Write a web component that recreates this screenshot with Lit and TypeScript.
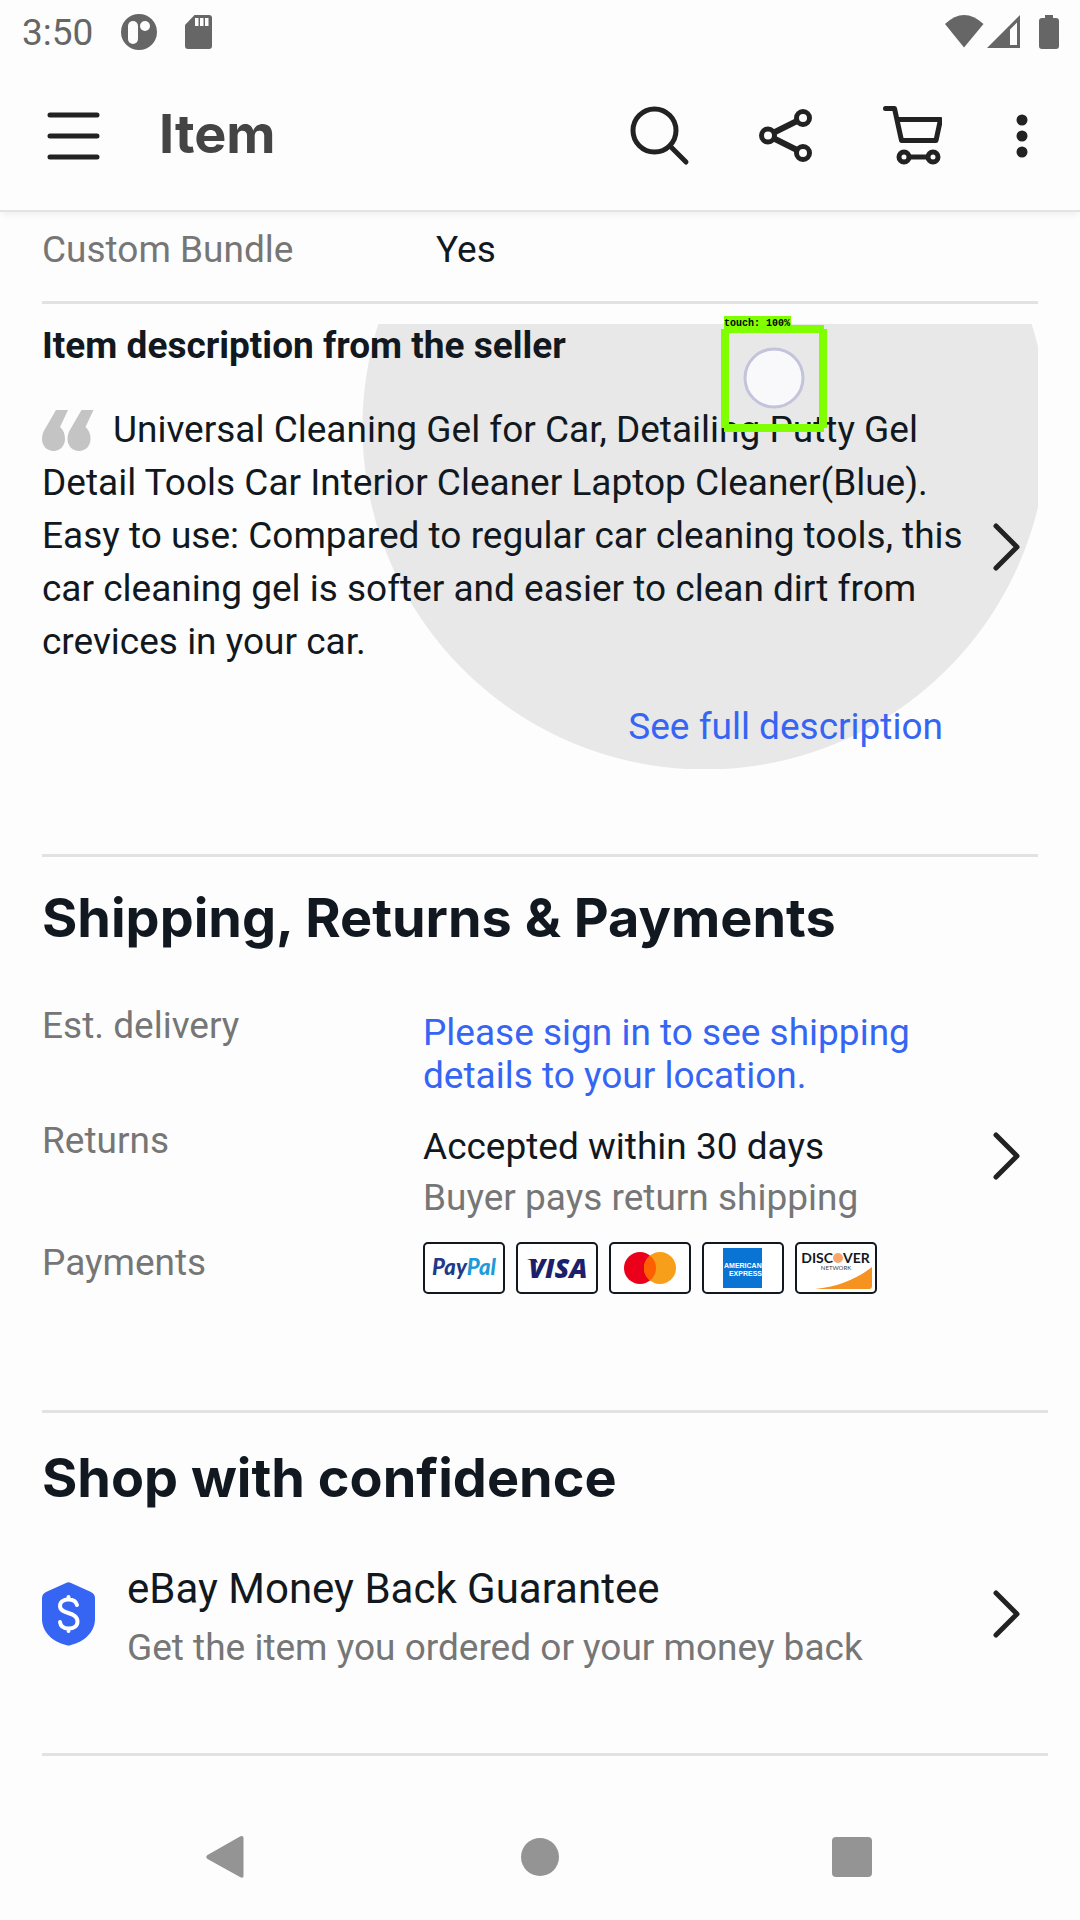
import { LitElement, html, css, svg } from "lit";
import { customElement } from "lit/decorators.js";

const chevron = html`<svg class="chevron" viewBox="0 0 28 48" width="28" height="48" aria-hidden="true">
  <path d="M4 3L25 24L4 45" fill="none" stroke="#222" stroke-width="5" stroke-linecap="round" stroke-linejoin="round" />
</svg>`;

const cards = [
  {
    name: "PayPal",
    art: svg`<text class="paypal" x="41" y="33" text-anchor="middle"><tspan fill="#1f3a87">Pay</tspan><tspan fill="#1e9bd9">Pal</tspan></text>`,
  },
  {
    name: "Visa",
    art: svg`<path d="M11 17h9l2 4z" fill="#1c1f6b" /><text class="visa" x="42" y="36" text-anchor="middle">VISA</text>`,
  },
  {
    name: "Mastercard",
    art: svg`<circle cx="31" cy="26" r="16" fill="#eb001b" /><circle cx="51" cy="26" r="16" fill="#f79e1b" />
      <path d="M41 13.500a16 16 0 0 1 0 25a16 16 0 0 1 0-25z" fill="#ff5f00" />`,
  },
  {
    name: "American Express",
    art: svg`<rect x="21" y="6" width="39" height="40" fill="#0a74d4" />
      <text class="amex" x="22" y="26">AMERICAN</text><text class="amex" x="60" y="34" text-anchor="end">EXPRESS</text>`,
  },
  {
    name: "Discover",
    art: svg`<text class="discover" x="38" y="21" text-anchor="end">DISC</text><circle cx="43" cy="16" r="5" fill="#f9a66c" />
      <text class="discover" x="48" y="21">VER</text><text class="network" x="41" y="28" text-anchor="middle">NETWORK</text>
      <path d="M20 47C42 45 62 37 77 25V44a3 3 0 0 1-3 3z" fill="#f69220" />`,
  },
];

@customElement("app-root")
export class AppRoot extends LitElement {
  static styles = css`
    :host {
      display: block;
      font-family: Roboto, "Liberation Sans", sans-serif;
      font-size: 37px;
      line-height: 42px;
      color: #111820;
      background: #fdfdfd;
    }
    .screen { display: flex; flex-direction: column; min-height: 100vh; }
    svg { display: block; flex: none; }
    h1, h2, h3, p, dl, dd { margin: 0; }
    a { color: #3665f3; text-decoration: none; }
    button { display: flex; align-items: center; justify-content: center; padding: 0; border: 0; background: none; cursor: pointer; }

    .status { display: flex; align-items: center; justify-content: space-between; height: 63px; padding: 0 20px 0 22px; color: #666; }
    .status-group { display: flex; align-items: center; }
    .status-left { gap: 28px; }
    .time { padding-top: 3px; }

    .bar { display: flex; align-items: center; height: 145px; padding: 0 37px 2px 37px; border-bottom: 2px solid #e3e3e3; box-shadow: 0 5px 6px -2px rgba(0, 0, 0, 0.06); }
    .title { flex: 1; margin-left: 48px; padding-bottom: 4px; font: 700 54px/64px Inter, sans-serif; color: #444; }
    .menu { width: 74px; height: 96px; }
    .actions { display: flex; align-items: center; gap: 52px; }
    .action { width: 74px; height: 96px; }
    .more { width: 42px; }

    main { flex: 1; padding: 17px 42px 0; }
    .specific { display: grid; grid-template-columns: 394px 1fr; padding-bottom: 30px; border-bottom: 3px solid #e2e2e2; }
    .muted { color: #767676; }

    .description {
      position: relative;
      display: flex;
      align-items: center;
      margin: 20px 0 85px;
      padding-right: 18px;
      background: radial-gradient(circle at 663px 103px, #e8e8e8 342px, transparent 343px);
    }
    .description-body { flex: 1; padding: 1px 16px 21px 0; }
    .description-title { font-size: 37px; font-weight: 700; }
    .quote { margin-top: 36px; line-height: 53px; }
    .quote-mark { display: inline-block; margin-right: 19px; vertical-align: -9px; }
    .more-line { margin: 38px 33px 0 0; text-align: right; }

    .touch { position: absolute; left: 679px; top: -8px; }
    .touch-label { position: absolute; left: 3px; top: 0; width: 67px; padding-top: 3px; font: 700 10px/10px "Liberation Mono", monospace; color: #000; background: #80ff00; white-space: nowrap; }

    .section { margin-right: -10px; border-bottom: 3px solid #e2e2e2; }
    .shipping { padding: 29px 0 104px; }
    .divider { height: 3px; background: #e2e2e2; }
    .heading { font: 700 54px/64px Inter, sans-serif; margin-bottom: 55px; }
    .linked { display: flex; align-items: center; padding-right: 28px; }
    .rows { flex: 1; display: grid; gap: 23px; padding-bottom: 12px; }
    .row { display: grid; grid-template-columns: 381px 1fr; }
    .value { padding-top: 6px; }
    .value-link { display: block; max-width: 510px; line-height: 43px; }
    .note { margin-top: 9px; }
    .cards { display: flex; gap: 11px; }

    .paypal { font: italic 900 22px Lato, sans-serif; }
    .visa { font: italic 800 27px "Open Sans", sans-serif; fill: #1c1f6b; }
    .amex { font: 700 7px "Liberation Sans", sans-serif; fill: #fff; }
    .discover { font: 700 14px Lato, sans-serif; fill: #111820; }
    .network { font: 6px Lato, sans-serif; fill: #444; }

    .confidence { padding: 33px 0 84px; }
    .confidence .heading { margin-bottom: 48px; }
    .guarantee { flex: 1; margin-left: 32px; padding-top: 6px; }
    .guarantee-title { font-size: 42px; font-weight: 400; line-height: 50px; margin-bottom: 13px; }

    .nav { display: grid; grid-template-columns: 1fr 1fr 1fr; height: 126px; padding: 0 72px; }
  `;

  render() {
    return html`<div class="screen">
      <div class="status">
        <div class="status-group status-left">
          <span class="time">3:50</span>
          <svg width="36" height="36" viewBox="0 0 36 36" aria-hidden="true">
            <circle cx="18" cy="18" r="18" fill="#666" />
            <rect x="7" y="7" width="10" height="23" rx="5" fill="#fdfdfd" /><circle cx="24" cy="12" r="5" fill="#fdfdfd" />
          </svg>
          <svg width="27" height="34" viewBox="0 0 27 34" aria-hidden="true">
            <path d="M9.500 0H24a3 3 0 0 1 3 3V31a3 3 0 0 1-3 3H3a3 3 0 0 1-3-3V10z" fill="#666" />
            <path d="M10 3h3.500v8H10zM15 3h3.500v8H15zM20 3h3.500v8H20z" fill="#fdfdfd" />
          </svg>
        </div>
        <div class="status-group">
          <svg width="116" height="36" viewBox="0 0 116 36" aria-hidden="true">
            <g fill="#666">
              <path d="M1 10Q20-8 39.500 10L20 33.500z" />
              <path fill-rule="evenodd" d="M43 34L76 1V34zM66 15.500V31H73V8.500z" />
              <path d="M101 1h8v3h3a3 3 0 0 1 3 3V32a3 3 0 0 1-3 3H98a3 3 0 0 1-3-3V7a3 3 0 0 1 3-3h3z" />
            </g>
          </svg>
        </div>
      </div>

      <header class="bar">
        <button class="menu" aria-label="Menu">
          <svg width="54" height="48" viewBox="0 0 54 48"><path d="M3 3H50M3 24H50M3 45H50" stroke="#222" stroke-width="5" stroke-linecap="round" /></svg>
        </button>
        <h1 class="title">Item</h1>
        <div class="actions">
          <button class="action" aria-label="Search">
            <svg width="60" height="60" viewBox="0 0 60 60" fill="none" stroke="#222" stroke-width="5" stroke-linecap="round">
              <circle cx="24.500" cy="24.500" r="21.500" /><path d="M40 40L56 56" />
            </svg>
          </button>
          <button class="action" aria-label="Share">
            <svg width="60" height="60" viewBox="0 0 60 60" fill="none" stroke="#222" stroke-width="5">
              <circle cx="12" cy="29.500" r="6.500" /><circle cx="47" cy="12" r="6.500" /><circle cx="47" cy="47" r="6.500" />
              <path d="M18 26.500L41 15M18 32.500L41 44" stroke-width="6" />
            </svg>
          </button>
          <button class="action" aria-label="Cart">
            <svg width="60" height="60" viewBox="0 0 60 60" fill="none" stroke="#222" stroke-width="5" stroke-linecap="round" stroke-linejoin="round">
              <path d="M3.500 2.500H12.500L19.500 34.500H54L58.500 13.500H15" /><circle cx="22" cy="51" r="5" /><circle cx="51" cy="51" r="5" /><path d="M28 51H45" />
            </svg>
          </button>
          <button class="action more" aria-label="More options">
            <svg width="12" height="48" viewBox="0 0 12 48" fill="#222"><circle cx="6" cy="8" r="5.500" /><circle cx="6" cy="24" r="5.500" /><circle cx="6" cy="40" r="5.500" /></svg>
          </button>
        </div>
      </header>

      <main>
        <dl class="specific"><dt class="muted">Custom Bundle</dt><dd>Yes</dd></dl>

        <section class="description">
          <div class="description-body">
            <h3 class="description-title">Item description from the seller</h3>
            <p class="quote"><svg class="quote-mark" width="52" height="41" viewBox="0 0 52 41" fill="#c4c4c4" aria-hidden="true">
              <path d="M14 0H26L18 17C21.500 20 23 24 23 29C23 36 18 41 11.500 41C5 41 0 36 0 29C0 25 1 22 3 19z" />
              <path d="M39.500 0H51.500L43.500 17C47 20 48.500 24 48.500 29C48.500 36 43.500 41 37 41C30.500 41 25.500 36 25.500 29C25.500 25 26.500 22 28.500 19z" />
            </svg>Universal Cleaning Gel for Car, Detailing Putty Gel Detail Tools Car Interior Cleaner Laptop Cleaner(Blue). Easy to use: Compared to regular car cleaning tools, this car cleaning gel is softer and easier to clean dirt from crevices in your car.</p>
            <p class="more-line"><a href="#description">See full description</a></p>
          </div>
          ${chevron}
          <div class="touch">
            <svg width="106" height="116" viewBox="0 0 106 116" aria-hidden="true">
              <path d="M3 13H103M3 112H103M4 13V112M102 13V112" stroke="#80ff00" stroke-width="8" />
              <circle cx="53" cy="62" r="29" fill="#f9f9fb" stroke="#c3c3dc" stroke-width="3" />
            </svg>
            <span class="touch-label">touch: 100%</span>
          </div>
        </section>
        <div class="divider"></div>

        <section class="section shipping">
          <h2 class="heading">Shipping, Returns &amp; Payments</h2>
          <div class="linked">
            <dl class="rows">
              <div class="row"><dt class="muted">Est. delivery</dt><dd class="value"><a class="value-link" href="#signin">Please sign in to see shipping details to your location.</a></dd></div>
              <div class="row"><dt class="muted">Returns</dt><dd class="value"><p>Accepted within 30 days</p><p class="muted note">Buyer pays return shipping</p></dd></div>
              <div class="row"><dt class="muted">Payments</dt><dd class="cards">${cards.map(
                (c) => html`<svg width="82" height="52" viewBox="0 0 82 52" role="img" aria-label=${c.name}>
                  <rect x="1" y="1" width="80" height="50" rx="4" fill="#fff" stroke="#111820" stroke-width="2" />${c.art}
                </svg>`
              )}</dd></div>
            </dl>
            ${chevron}
          </div>
        </section>

        <section class="section confidence">
          <h2 class="heading">Shop with confidence</h2>
          <div class="linked">
            <svg width="53" height="64" viewBox="0 0 53 64" aria-hidden="true">
              <path d="M24 1Q26.500-.5 29 1L49 10Q53 12 53 16V37C53 50 42 60 29 63Q26.500 64 24 63C11 60 0 50 0 37V16Q0 12 4 10z" fill="#3665f3" />
              <path d="M35 23C34 19 31 17.500 26.500 17.500C21 17.500 18 20 18 24C18 33 35.500 29 35.500 39.500C35.500 44 32 46.500 26.500 46.500C21 46.500 18.500 44 18 40M26.500 15V17M26.500 47V49" fill="none" stroke="#fff" stroke-width="4" stroke-linecap="round" />
            </svg>
            <div class="guarantee">
              <h3 class="guarantee-title">eBay Money Back Guarantee</h3>
              <p class="muted">Get the item you ordered or your money back</p>
            </div>
            ${chevron}
          </div>
        </section>
      </main>

      <nav class="nav">
        <button aria-label="Back"><svg width="44" height="42" viewBox="0 0 44 42"><path d="M34 .5Q37.500-1 37.500 2V40Q37.500 43 34 41L1.500 23Q-1 21 1.500 19z" fill="#949494" /></svg></button>
        <button aria-label="Home"><svg width="38" height="38" viewBox="0 0 38 38"><circle cx="19" cy="19" r="19" fill="#949494" /></svg></button>
        <button aria-label="Recents"><svg width="40" height="40" viewBox="0 0 40 40"><rect width="40" height="40" rx="4" fill="#949494" /></svg></button>
      </nav>
    </div>`;
  }
}
